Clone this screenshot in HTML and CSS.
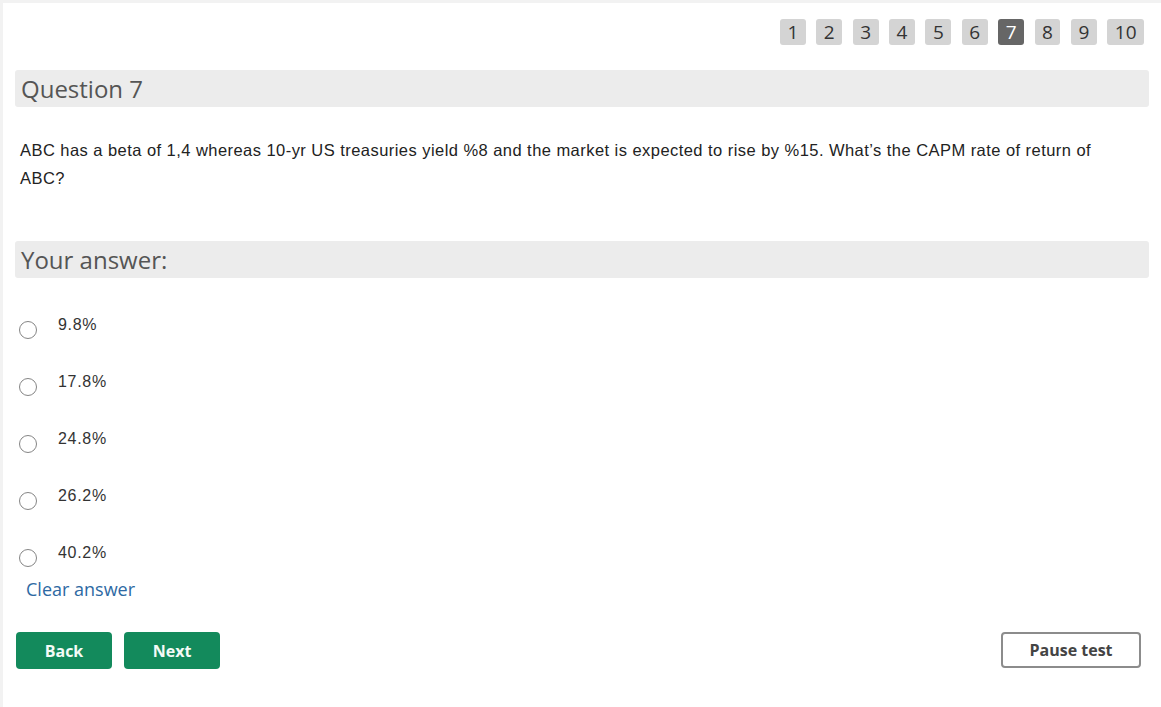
FILE: index.html
```html
<!DOCTYPE html>
<html lang="en">
<head>
  <meta charset="UTF-8">
  <title>Question 7</title>
  <link rel="stylesheet" href="styles.css">
</head>
<body>
  <div class="page">
    <nav class="pager">
      <a class="page-num">1</a>
      <a class="page-num">2</a>
      <a class="page-num">3</a>
      <a class="page-num">4</a>
      <a class="page-num">5</a>
      <a class="page-num">6</a>
      <a class="page-num active">7</a>
      <a class="page-num">8</a>
      <a class="page-num">9</a>
      <a class="page-num">10</a>
    </nav>

    <h2 class="section-bar">Question 7</h2>
    <p class="question-text">ABC has a beta of 1,4 whereas 10-yr US treasuries yield %8 and the market is expected to rise by %15. What’s the CAPM rate of return of ABC?</p>

    <h2 class="section-bar answer-bar">Your answer:</h2>
    <div class="options">
      <label class="option"><input type="radio" name="answer"><span>9.8%</span></label>
      <label class="option"><input type="radio" name="answer"><span>17.8%</span></label>
      <label class="option"><input type="radio" name="answer"><span>24.8%</span></label>
      <label class="option"><input type="radio" name="answer"><span>26.2%</span></label>
      <label class="option"><input type="radio" name="answer"><span>40.2%</span></label>
    </div>
    <a class="clear-link">Clear answer</a>

    <div class="actions">
      <button class="btn btn-green">Back</button>
      <button class="btn btn-green">Next</button>
      <button class="btn btn-outline">Pause test</button>
    </div>
  </div>
</body>
</html>
```

FILE: styles.css
```css
/* Quiz page */
body {
  margin: 0;
  background-color: #f2f2f2;
  padding: 3px 0 0 3px;
  font-family: "Open Sans", sans-serif;
}

.page {
  background-color: #fff;
  min-height: 704px;
  padding: 16px 12px 0 12px;
  box-sizing: border-box;
}

.pager {
  display: flex;
  justify-content: flex-end;
  gap: 10.5px;
  padding-right: 5px;
}

.page-num {
  background-color: #d4d4d4;
  color: #333;
  font-size: 19px;
  height: 26px;
  line-height: 26px;
  padding: 0 7.5px;
  border-radius: 3px;
  cursor: pointer;
}

.page-num.active {
  background-color: #666;
  color: #fff;
}

.section-bar {
  margin: 25px 0 0;
  background-color: #ececec;
  border-radius: 3px;
  height: 37px;
  line-height: 38px;
  padding: 0 6px;
  font-size: 24px;
  font-weight: 400;
  color: #555;
}

.question-text {
  margin: 29px 0 0;
  padding: 0 30px 0 5px;
  font-family: "Liberation Sans", Arial, sans-serif;
  font-size: 16.5px;
  letter-spacing: 0.45px;
  line-height: 28px;
  color: #222;
}

.answer-bar {
  margin-top: 49px;
}

.options {
  display: flex;
  flex-direction: column;
  gap: 37px;
  margin-top: 37px;
  padding-left: 4px;
}

.option {
  display: flex;
  align-items: flex-start;
  gap: 21px;
  height: 20px;
  font-family: "Liberation Sans", Arial, sans-serif;
  font-size: 16px;
  letter-spacing: 0.7px;
  line-height: 20px;
  color: #333;
  cursor: pointer;
}

.option input {
  appearance: none;
  -webkit-appearance: none;
  margin: 6px 0 0;
  width: 18px;
  height: 18px;
  border: 1.6px solid #858585;
  border-radius: 50%;
  box-sizing: border-box;
  flex-shrink: 0;
}

.clear-link {
  display: block;
  margin-top: 14px;
  padding-left: 11px;
  font-size: 18px;
  line-height: 24px;
  color: #2d69a3;
  cursor: pointer;
}

.actions {
  display: flex;
  gap: 12px;
  margin-top: 31px;
  padding: 0 8px 0 1px;
}

.btn {
  font-family: "Open Sans", sans-serif;
  font-size: 16px;
  font-weight: 700;
  border-radius: 4px;
  cursor: pointer;
}

.btn-green {
  width: 96px;
  height: 37px;
  background-color: #138a5c;
  color: #f4fbf7;
  border: none;
}

.btn-outline {
  margin-left: auto;
  width: 140px;
  height: 36px;
  background-color: #fff;
  color: #444;
  border: 2px solid #8c8c8c;
}
```
